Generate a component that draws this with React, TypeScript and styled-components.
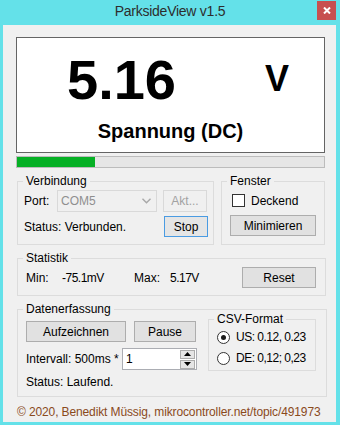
import React from "react";
import styled, { createGlobalStyle } from "styled-components";

const Global = createGlobalStyle`
  html, body { margin: 0; padding: 0; }
  body {
    font-family: "Liberation Sans", Arial, sans-serif;
    font-size: 12px;
    color: #000;
  }
`;

const Window = styled.div`
  width: 340px;
  height: 425px;
  background: #64e1e9;
  display: flex;
  flex-direction: column;
`;

const TitleBar = styled.div`
  height: 25px;
  display: grid;
  grid-template-columns: 1fr auto 1fr;
  align-items: start;
`;

const Title = styled.div`
  grid-column: 2;
  font-size: 14px;
  letter-spacing: -0.25px;
  line-height: 23px;
  color: #2d2d2d;
`;

const CloseButton = styled.div`
  grid-column: 3;
  justify-self: end;
  width: 19px;
  height: 19px;
  margin: 1px 4px 0 0;
  background: #c75050;
  display: flex;
  align-items: center;
  justify-content: center;
`;

const Client = styled.div`
  margin: 0 4px 0 3px;
  height: 397px;
  box-sizing: border-box;
  background: #f0f0f0;
  padding: 12px 0 0 13px;
  display: flex;
  flex-direction: column;
`;

const Display = styled.div`
  width: 309px;
  height: 116px;
  box-sizing: border-box;
  border: 1px solid #646464;
  background: #fff;
  display: flex;
  flex-direction: column;
`;

const ReadingRow = styled.div`
  display: flex;
  align-items: flex-start;
  padding-left: 50px;
  height: 70px;
`;

const Value = styled.div`
  font-size: 56px;
  font-weight: 700;
  line-height: 56px;
  margin-top: 14px;
`;

const Unit = styled.div`
  font-size: 36px;
  font-weight: 700;
  line-height: 36px;
  margin: 23px 0 0 89px;
`;

const Mode = styled.div`
  margin-top: 11px;
  font-size: 20px;
  font-weight: 700;
  line-height: 24px;
  text-align: center;
`;

const Progress = styled.div`
  margin-top: 3px;
  width: 309px;
  height: 12px;
  box-sizing: border-box;
  border: 1px solid #bcbcbc;
  background: #e6e6e6;
`;

const ProgressFill = styled.div`
  height: 100%;
  background: #06b025;
`;

const GroupRow = styled.div`
  display: flex;
  gap: 7px;
  margin: 13px 0 0 1px;
`;

const Group = styled.div<{ $w: number; $h: number; $mt?: number }>`
  width: ${(p) => p.$w}px;
  height: ${(p) => p.$h}px;
  margin-top: ${(p) => p.$mt ?? 0}px;
  box-sizing: border-box;
  border: 1px solid #dcdcdc;
  display: flex;
  flex-direction: column;
  flex-shrink: 0;
`;

const Caption = styled.div`
  align-self: flex-start;
  margin: -9px 0 0 5px;
  padding: 0 3px;
  height: 16px;
  line-height: 16px;
  background: #f0f0f0;
`;

const Row = styled.div<{ $mt: number; $h: number; $pl: number }>`
  display: flex;
  align-items: center;
  margin-top: ${(p) => p.$mt}px;
  height: ${(p) => p.$h}px;
  padding-left: ${(p) => p.$pl}px;
`;

const Label = styled.span<{ $w?: number }>`
  ${(p) => (p.$w ? `width: ${p.$w}px; flex-shrink: 0;` : "flex: 1;")}
  white-space: nowrap;
`;

const Num = styled.span`
  letter-spacing: -0.5px;
  white-space: nowrap;
`;

const Button = styled.button<{ $w: number; $h?: number; $variant?: "default" | "disabled" }>`
  width: ${(p) => p.$w}px;
  height: ${(p) => p.$h ?? 21}px;
  box-sizing: border-box;
  padding: 0;
  font-family: inherit;
  font-size: 12px;
  flex-shrink: 0;
  color: ${(p) => (p.$variant === "disabled" ? "#a2a2a2" : "#000")};
  background: ${(p) =>
    p.$variant === "disabled" ? "#f0f0f0" : p.$variant === "default" ? "#e5e5e5" : "#e1e1e1"};
  border: 1px solid
    ${(p) =>
      p.$variant === "disabled" ? "#d9d9d9" : p.$variant === "default" ? "#4a9be2" : "#adadad"};
`;

const Combo = styled.div`
  width: 100px;
  height: 22px;
  box-sizing: border-box;
  border: 1px solid #d9d9d9;
  background: #f0f0f0;
  color: #8f8f8f;
  display: flex;
  align-items: center;
  justify-content: space-between;
  padding: 0 5px 0 3px;
  flex-shrink: 0;
`;

const Checkbox = styled.span`
  width: 13px;
  height: 13px;
  box-sizing: border-box;
  border: 1px solid #333;
  background: #fff;
  flex-shrink: 0;
`;

const Radio = styled.span<{ $checked?: boolean }>`
  width: 13px;
  height: 13px;
  box-sizing: border-box;
  border: 1px solid #333;
  border-radius: 50%;
  background: #fff;
  display: flex;
  align-items: center;
  justify-content: center;
  flex-shrink: 0;
  &::after {
    content: "";
    width: 5px;
    height: 5px;
    border-radius: 50%;
    background: ${(p) => (p.$checked ? "#1a1a1a" : "transparent")};
  }
`;

const ControlText = styled.span<{ $tight?: boolean }>`
  margin-left: 6px;
  white-space: nowrap;
  letter-spacing: ${(p) => (p.$tight ? "-0.5px" : "normal")};
`;

const StatGrid = styled.div`
  display: grid;
  grid-template-columns: 36px 72px 36px 72px 74px;
  align-items: center;
  margin-top: 1px;
  height: 21px;
  padding-left: 8px;
`;

const DataBody = styled.div`
  display: flex;
`;

const LeftCol = styled.div`
  width: 190px;
  box-sizing: border-box;
  padding-left: 8px;
  display: flex;
  flex-direction: column;
`;

const ButtonRow = styled.div`
  display: flex;
  gap: 8px;
  margin-top: 4px;
`;

const StatusLine = styled.div`
  margin-top: 4px;
  line-height: 16px;
`;

const UpDown = styled.div`
  width: 75px;
  height: 22px;
  box-sizing: border-box;
  border: 1px solid #abadb3;
  background: #fff;
  display: flex;
  align-items: center;
  flex-shrink: 0;
`;

const UpDownText = styled.span`
  flex: 1;
  padding-left: 3px;
`;

const Spinner = styled.div`
  width: 15px;
  display: flex;
  flex-direction: column;
  gap: 1px;
  margin-right: 1px;
`;

const SpinButton = styled.div`
  height: 9px;
  box-sizing: border-box;
  border: 1px solid #acacac;
  background: #e5e5e5;
  display: flex;
  align-items: center;
  justify-content: center;
`;

const Footer = styled.div`
  margin: 7px 0 0 1px;
  line-height: 16px;
  color: #8a4a1c;
  letter-spacing: -0.12px;
  white-space: nowrap;
`;

const Chevron = () => (
  <svg width="9" height="6" viewBox="0 0 9 6">
    <polyline points="0.5,0.8 4.5,4.8 8.5,0.8" fill="none" stroke="#a8a8a8" strokeWidth="1.4" />
  </svg>
);

const Tri = ({ up }: { up?: boolean }) => (
  <svg width="7" height="4" viewBox="0 0 7 4">
    <polygon points={up ? "3.5,0 7,4 0,4" : "0,0 7,0 3.5,4"} fill="#000" />
  </svg>
);

export default function App() {
  const pct = 25.4;
  return (
    <>
      <Global />
      <Window>
        <TitleBar>
          <Title>ParksideView v1.5</Title>
          <CloseButton>
            <svg width="8" height="7" viewBox="0 0 8 7">
              <path d="M1 0.5 L7 6.5 M7 0.5 L1 6.5" stroke="#fff" strokeWidth="2" />
            </svg>
          </CloseButton>
        </TitleBar>
        <Client>
          <Display>
            <ReadingRow>
              <Value>5.16</Value>
              <Unit>V</Unit>
            </ReadingRow>
            <Mode>Spannung (DC)</Mode>
          </Display>
          <Progress>
            <ProgressFill style={{ width: `${pct}%` }} />
          </Progress>

          <GroupRow>
            <Group $w={197} $h={64}>
              <Caption>Verbindung</Caption>
              <Row $mt={1} $h={22} $pl={6}>
                <Label $w={33}>Port:</Label>
                <Combo>
                  <span>COM5</span>
                  <Chevron />
                </Combo>
                <Button $w={44} $h={22} $variant="disabled" style={{ marginLeft: 6 }}>
                  Akt...
                </Button>
              </Row>
              <Row $mt={4} $h={21} $pl={6}>
                <Label>Status: Verbunden.</Label>
                <Button $w={44} $variant="default" style={{ marginRight: 5 }}>
                  Stop
                </Button>
              </Row>
            </Group>
            <Group $w={104} $h={64}>
              <Caption>Fenster</Caption>
              <Row $mt={5} $h={13} $pl={10}>
                <Checkbox />
                <ControlText>Deckend</ControlText>
              </Row>
              <Row $mt={8} $h={21} $pl={8}>
                <Button $w={86}>Minimieren</Button>
              </Row>
            </Group>
          </GroupRow>

          <GroupRow>
            <Group $w={309} $h={38}>
              <Caption>Statistik</Caption>
              <StatGrid>
                <span>Min:</span>
                <Num>-75.1mV</Num>
                <span>Max:</span>
                <Num>5.17V</Num>
                <Button $w={74}>Reset</Button>
              </StatGrid>
            </Group>
          </GroupRow>

          <GroupRow>
            <Group $w={310} $h={88}>
              <Caption>Datenerfassung</Caption>
              <DataBody>
                <LeftCol>
                  <ButtonRow>
                    <Button $w={100}>Aufzeichnen</Button>
                    <Button $w={62}>Pause</Button>
                  </ButtonRow>
                  <Row $mt={6} $h={22} $pl={0}>
                    <Label $w={96}>Intervall: 500ms *</Label>
                    <UpDown>
                      <UpDownText>1</UpDownText>
                      <Spinner>
                        <SpinButton>
                          <Tri up />
                        </SpinButton>
                        <SpinButton>
                          <Tri />
                        </SpinButton>
                      </Spinner>
                    </UpDown>
                  </Row>
                  <StatusLine>Status: Laufend.</StatusLine>
                </LeftCol>
                <Group $w={108} $h={52} $mt={2}>
                  <Caption>CSV-Format</Caption>
                  <Row $mt={3} $h={14} $pl={8}>
                    <Radio $checked />
                    <ControlText $tight>US: 0.12, 0.23</ControlText>
                  </Row>
                  <Row $mt={7} $h={14} $pl={8}>
                    <Radio />
                    <ControlText $tight>DE: 0,12; 0,23</ControlText>
                  </Row>
                </Group>
              </DataBody>
            </Group>
          </GroupRow>

          <Footer>© 2020, Benedikt Müssig, mikrocontroller.net/topic/491973</Footer>
        </Client>
      </Window>
    </>
  );
}
